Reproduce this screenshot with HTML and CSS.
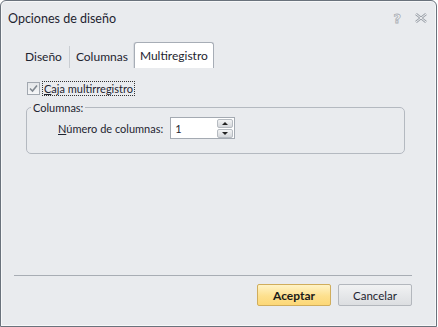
FILE: index.html
```html
<!DOCTYPE html>
<html lang="es">
<head>
  <meta charset="UTF-8">
  <title>Opciones de diseño</title>
  <link rel="stylesheet" href="styles.css">
</head>
<body>
  <div class="window">
    <div class="titlebar">
      <span class="title">Opciones de diseño</span>
      <span class="ctrl help">?</span>
      <span class="ctrl close">
        <svg width="12" height="10" viewBox="0 0 12 10"><path d="M1 1 L11 9 M11 1 L1 9" stroke="#9aa0a8" stroke-width="2.6" fill="none"/><path d="M1 1 L11 9 M11 1 L1 9" stroke="#f2f3f5" stroke-width="1" fill="none"/></svg>
      </span>
    </div>

    <div class="tabs">
      <div class="tab">Diseño</div>
      <div class="tab sep">Columnas</div>
      <div class="tab active">Multiregistro</div>
    </div>

    <div class="panel">
      <div class="check-row">
        <span class="checkbox">
          <svg width="9" height="9" viewBox="0 0 9 9"><path d="M1 4.5 L3.5 7 L8 1.5" stroke="#808890" stroke-width="1.6" fill="none"/></svg>
        </span>
        <span class="check-label"><u>C</u>aja multirregistro</span>
      </div>

      <fieldset class="group">
        <legend>Columnas:</legend>
        <div class="field">
          <label><u>N</u>úmero de columnas:</label>
          <div class="spin">
            <span class="spin-value">1</span>
            <div class="spin-btns">
              <span class="spin-btn"><i class="up"></i></span>
              <span class="spin-btn"><i class="down"></i></span>
            </div>
          </div>
        </div>
      </fieldset>
    </div>

    <div class="footer">
      <button class="btn primary">Aceptar</button>
      <button class="btn">Cancelar</button>
    </div>
  </div>
</body>
</html>
```

FILE: styles.css
```css
html, body {
  margin: 0;
  padding: 0;
  background: #ffffff;
}
body {
  font-family: Lato, "Open Sans", sans-serif;
  font-size: 11px;
  color: #1e2430;
}
.window {
  box-sizing: border-box;
  width: 437px;
  height: 327px;
  border: 1px solid #6a727c;
  border-radius: 6px 6px 0 0;
  background: #e9ebee;
  display: flex;
  flex-direction: column;
  box-shadow: inset 0 0 0 1px #f7f8f9;
}
.titlebar {
  height: 34px;
  display: flex;
  align-items: center;
  padding: 0 9px 0 7px;
}
.title {
  flex: 1;
  font-size: 12.5px;
}
.ctrl {
  color: #f4f5f6;
  font-weight: bold;
  font-size: 13px;
  -webkit-text-stroke: 0.8px #a9aeb5;
}
.help {
  margin-right: 14px;
  font-family: "DejaVu Sans", sans-serif;
}
.close svg {
  display: block;
}
.tabs {
  display: flex;
  margin: 8px 0 0 18px;
  height: 25px;
  align-items: flex-end;
  font-size: 12px;
}
.tab {
  padding: 0 6px;
  height: 22px;
  line-height: 22px;
}
.tab.sep {
  border-left: 1px solid #c9cdd2;
  margin-left: 1px;
}
.tab.active {
  height: 25px;
  line-height: 25px;
  margin-left: 0;
  padding: 0 5px;
  background: #ffffff;
  border: 1px solid #a7adb6;
  border-bottom: none;
  border-radius: 3px 3px 0 0;
  box-shadow: -1px 0 0 #d7dbe0;
}
.panel {
  flex: 1;
  padding: 13px 31px 0 25px;
}
.check-row {
  display: flex;
  align-items: center;
  height: 14px;
}
.checkbox {
  box-sizing: border-box;
  width: 13px;
  height: 13px;
  border: 1px solid #a2a8b0;
  background: linear-gradient(#e4e6e9, #f6f7f8);
  display: flex;
  align-items: center;
  justify-content: center;
  margin: 0 2px 0 1px;
}
.checkbox svg {
  display: block;
}
.check-label {
  border: 1px dotted #333;
  padding: 0 1px;
  line-height: 13px;
}
.group {
  margin: 6px 0 0 0;
  padding: 0 0 14px 4px;
  border: 1px solid #b4b9c0;
  border-radius: 5px;
}
.group legend {
  padding: 0 2px;
  margin-left: 0;
  line-height: 13px;
}
.field {
  display: flex;
  align-items: center;
  margin: 3px 0 0 27px;
}
.field label {
  margin-right: 7px;
}
.spin {
  box-sizing: border-box;
  width: 65px;
  height: 22px;
  border: 1px solid #a4aab2;
  background: #fff;
  display: flex;
  align-items: center;
}
.spin-value {
  flex: 1;
  padding-left: 4px;
}
.spin-btns {
  display: flex;
  flex-direction: column;
  gap: 1px;
  margin-right: 1px;
}
.spin-btn {
  box-sizing: border-box;
  width: 16px;
  height: 9px;
  border: 1px solid #b6bbc1;
  border-radius: 2px;
  background: linear-gradient(#f3f4f5, #d4d7db);
  display: flex;
  align-items: center;
  justify-content: center;
}
.spin-btn i {
  width: 0;
  height: 0;
  border-left: 3px solid transparent;
  border-right: 3px solid transparent;
}
.spin-btn .up {
  border-bottom: 3px solid #222;
}
.spin-btn .down {
  border-top: 3px solid #222;
}
.footer {
  margin: 0 24px 20px 13px;
  border-top: 1px solid #a8adb4;
  padding-top: 8px;
  display: flex;
  justify-content: flex-end;
  gap: 7px;
}
.btn {
  box-sizing: border-box;
  width: 74px;
  height: 22px;
  font-family: inherit;
  font-size: 11.5px;
  color: #1e2430;
  border: 1px solid #b3b7bd;
  border-radius: 2px;
  background: linear-gradient(#f1f2f3, #dcdee1);
  padding: 0;
}
.btn.primary {
  font-weight: bold;
  font-size: 12px;
  color: #1a1a1a;
  border-color: #d0ad5c;
  background: linear-gradient(#fff3c6, #fde08e 55%, #fcd776);
}
```
